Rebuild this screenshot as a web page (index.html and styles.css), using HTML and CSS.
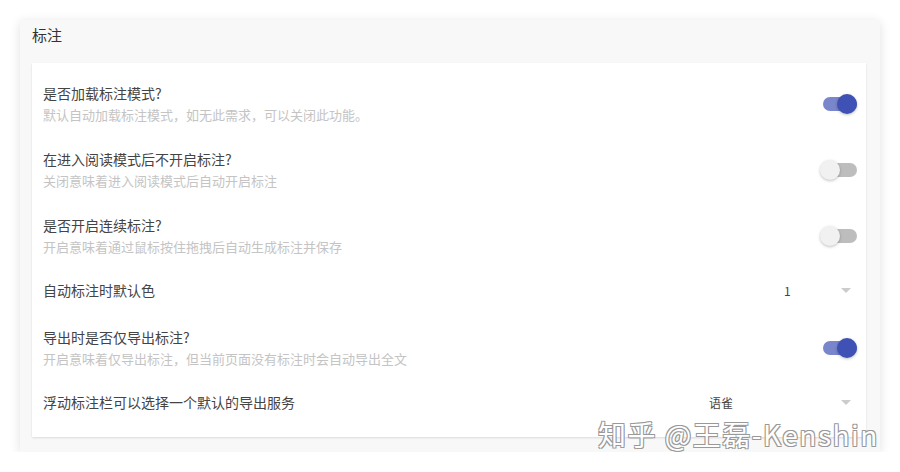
FILE: index.html
```html
<!DOCTYPE html>
<html>
<head>
    <title>标注设置</title>
    <link rel="stylesheet" href="styles.css">
</head>
<body>
    <div class="panel">
        <div class="panel-title">标注</div>
        <div class="card">
            <div class="row">
                <div class="text">
                    <div class="label">是否加载标注模式?</div>
                    <div class="desc">默认自动加载标注模式，如无此需求，可以关闭此功能。</div>
                </div>
                <span class="switch on"><span class="thumb"></span></span>
            </div>
            <div class="row">
                <div class="text">
                    <div class="label">在进入阅读模式后不开启标注?</div>
                    <div class="desc">关闭意味着进入阅读模式后自动开启标注</div>
                </div>
                <span class="switch"><span class="thumb"></span></span>
            </div>
            <div class="row">
                <div class="text">
                    <div class="label">是否开启连续标注?</div>
                    <div class="desc">开启意味着通过鼠标按住拖拽后自动生成标注并保存</div>
                </div>
                <span class="switch"><span class="thumb"></span></span>
            </div>
            <div class="row single">
                <div class="text">
                    <div class="label">自动标注时默认色</div>
                </div>
                <div class="select short">
                    <span class="value">1</span>
                    <span class="caret"></span>
                </div>
            </div>
            <div class="row">
                <div class="text">
                    <div class="label">导出时是否仅导出标注?</div>
                    <div class="desc">开启意味着仅导出标注，但当前页面没有标注时会自动导出全文</div>
                </div>
                <span class="switch on"><span class="thumb"></span></span>
            </div>
            <div class="row single">
                <div class="text">
                    <div class="label">浮动标注栏可以选择一个默认的导出服务</div>
                </div>
                <div class="select wide">
                    <span class="value">语雀</span>
                    <span class="caret"></span>
                </div>
            </div>
        </div>
    </div>
    <div class="watermark">知乎 @王磊-Kenshin</div>
</body>
</html>
```

FILE: styles.css
```css
body {
    margin: 0;
    padding: 20px 20px 0 20px;
    background-color: #fff;
    font-family: "Noto Sans CJK SC", "Liberation Sans", sans-serif;
    color: #333;
}

.panel {
    width: 860px;
    box-sizing: border-box;
    padding: 0 14px 15px 12px;
    background-color: #f8f8f8;
    box-shadow: 0 2px 10px rgba(0, 0, 0, 0.12);
}

.panel-title {
    height: 43px;
    line-height: 30px;
    font-size: 15px;
    color: #333;
}

.card {
    background-color: #fff;
    padding: 8px 9px 10px 11px;
    box-shadow: 0 1px 2px rgba(0, 0, 0, 0.12);
}

.row {
    display: flex;
    align-items: center;
    justify-content: space-between;
    padding: 11px 0;
}

.row.single {
    padding: 10px 0 14px 0;
}

.label {
    font-size: 14px;
    line-height: 22px;
    color: #444;
}

.desc {
    font-size: 13px;
    line-height: 22px;
    color: #c4c4c4;
}

/* switches */
.switch {
    position: relative;
    width: 34px;
    height: 14px;
    border-radius: 7px;
    background-color: #bdbdbd;
}

.switch .thumb {
    position: absolute;
    top: -3px;
    left: -3px;
    width: 20px;
    height: 20px;
    border-radius: 50%;
    background-color: #f1f1f1;
    box-shadow: 0 1px 3px rgba(0, 0, 0, 0.25);
}

.switch.on {
    background-color: #7986cb;
}

.switch.on .thumb {
    left: 14px;
    background-color: #3f51b5;
}

/* selects */
.select {
    display: flex;
    align-items: center;
    justify-content: space-between;
    height: 22px;
    font-size: 12px;
    color: #444;
    margin-right: 3px;
}

.select.short {
    width: 70px;
}

.select.wide {
    width: 145px;
}

.caret {
    width: 0;
    height: 0;
    border-left: 5px solid transparent;
    border-right: 5px solid transparent;
    border-top: 5px solid #ccc;
    margin-right: 3px;
}

.watermark {
    position: absolute;
    left: 598px;
    top: 416px;
    font-size: 28px;
    line-height: 36px;
    letter-spacing: 1.5px;
    color: #fff;
    text-shadow: -1px -1px 0 #999, 1px -1px 0 #999, -1px 1px 0 #999, 1px 1px 0 #999;
}
```
